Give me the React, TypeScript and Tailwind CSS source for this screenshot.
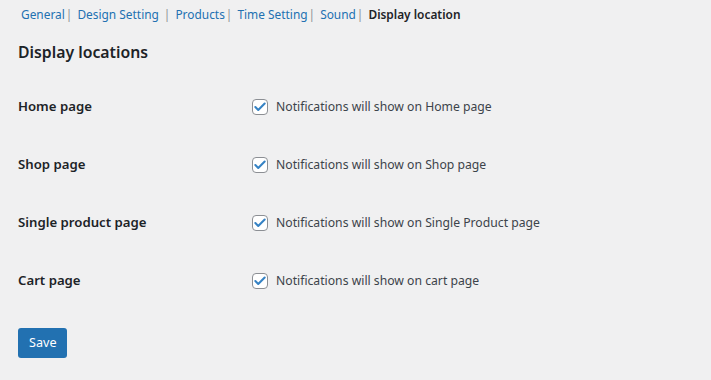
import { Check } from 'lucide-react';

const tabs = ["General", "Design Setting", "Products", "Time Setting", "Sound"];

const rows = [
  { label: "Home page", text: "Notifications will show on Home page" },
  { label: "Shop page", text: "Notifications will show on Shop page" },
  { label: "Single product page", text: "Notifications will show on Single Product page" },
  { label: "Cart page", text: "Notifications will show on cart page" },
];

export default function App() {
  return (
    <div
      className="w-[711px] h-[380px] bg-[#f0f0f1] text-[#1d2327] text-[12.2px] overflow-hidden"
      style={{ fontFamily: '"Noto Sans", "Open Sans", sans-serif' }}
    >
      {/* Tabs */}
      <div className="flex items-center pl-[21px] pt-[4px] h-[20px] leading-[20px] box-content text-[11.9px]">
        {tabs.map((t, i) => (
          <span key={i} className="flex items-center">
            <a className="text-[#2271b1]">{t}</a>
            <span className={`text-[#8c8f94] ${i === 1 ? 'mx-[5px]' : 'ml-[1px] mr-[5px]'}`}>|</span>
          </span>
        ))}
        <span className="font-semibold text-[#1d2327]">Display location</span>
      </div>

      {/* Heading */}
      <h2 className="pl-[18px] mt-[16px] text-[15.8px] font-semibold leading-[24px]">Display locations</h2>

      {/* Rows */}
      <div className="mt-[14px] pl-[18px]">
        {rows.map((r, i) => (
          <div key={i} className="flex items-center h-[58px]">
            <div className="w-[234px] text-[13.2px] font-semibold">{r.label}</div>
            <label className="flex items-center gap-[8px] text-[#3c434a]">
              <span className="w-[16px] h-[16px] rounded-[4px] border border-[#8c8f94] bg-white flex items-center justify-center">
                <Check className="w-[14px] h-[14px] text-[#3582c4]" strokeWidth={3.5} />
              </span>
              <span>{r.text}</span>
            </label>
          </div>
        ))}
      </div>

      {/* Save */}
      <div className="pl-[18px] mt-[18px]">
        <button className="h-[30px] px-[11px] rounded-[3px] bg-[#2271b1] text-white text-[12.6px] leading-[28px]">
          Save
        </button>
      </div>
    </div>
  );
}
